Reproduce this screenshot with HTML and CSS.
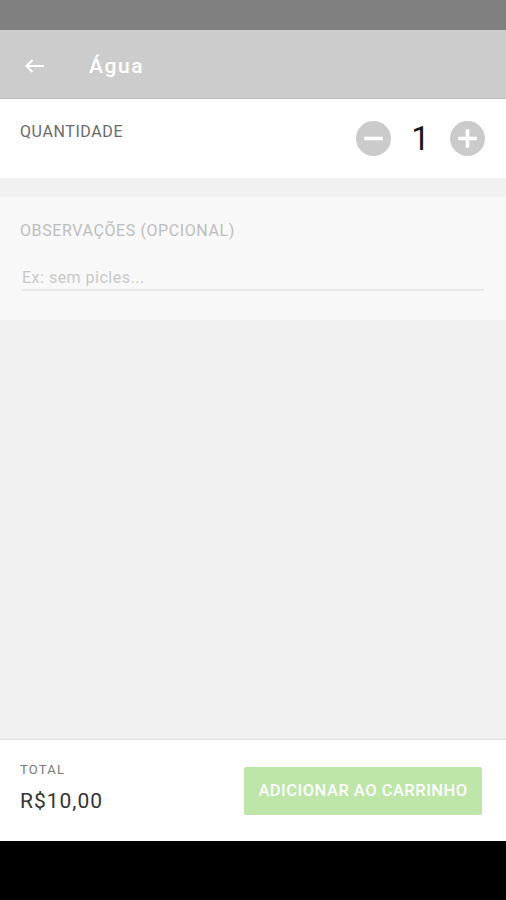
FILE: index.html
```html
<!doctype html>
<html>
<head>
<meta charset="utf-8">
<title>Água</title>
<link rel="stylesheet" href="styles.css">
</head>
<body>
<div class="screen">
	<div class="status"></div>
	<div class="appbar">
		<svg class="back" width="22" height="16" viewBox="0 0 22 16"><path d="M20 8H2.5M8.5 2L2.5 8l6 6" fill="none" stroke="#fff" stroke-width="2"/></svg>
		<h1 class="title">Água</h1>
	</div>
	<div class="qty">
		<span class="label">QUANTIDADE</span>
		<div class="stepper">
			<span class="round"><svg width="35" height="35" viewBox="0 0 36 36"><circle cx="18" cy="18" r="18" fill="#cbcbcb"/><rect x="8.5" y="16.2" width="19" height="3.6" fill="#fff"/></svg></span>
			<span class="num">1</span>
			<span class="round"><svg width="35" height="35" viewBox="0 0 36 36"><circle cx="18" cy="18" r="18" fill="#cbcbcb"/><rect x="8.5" y="16.2" width="19" height="3.6" fill="#fff"/><rect x="16.2" y="8.5" width="3.6" height="19" fill="#fff"/></svg></span>
		</div>
	</div>
	<div class="obs">
		<span class="label light">OBSERVAÇÕES (OPCIONAL)</span>
		<div class="field">Ex: sem picles...</div>
	</div>
	<div class="fill"></div>
	<div class="footer">
		<div class="total">
			<span class="tlabel">TOTAL</span>
			<span class="price">R$10,00</span>
		</div>
		<button class="add">ADICIONAR AO CARRINHO</button>
	</div>
	<div class="nav"></div>
</div>
</body>
</html>
```

FILE: styles.css
```css
*{ margin:0; padding:0; box-sizing:border-box;}
body{ font-family:Roboto, "Liberation Sans", sans-serif; background:#f1f1f1;}
.screen{ width:506px; height:900px; display:flex; flex-direction:column;}
.status{ height:30px; background:#808080;}
.appbar{ height:69px; background:#cccccc; display:flex; align-items:center; padding:3px 0 0 24px; border-bottom:1px solid #bdbdbd;}
.back{ display:block;}
.title{ margin-left:43px; color:#fff; font-size:21px; font-weight:500; letter-spacing:1.6px;}
.qty{ height:79px; background:#fff; display:flex; justify-content:space-between; align-items:flex-start; padding:22px 21px 0 20px;}
.qty .label{ margin-top:1px;}
.label{ font-size:16px; color:#6a6a6a; letter-spacing:0.6px; line-height:20px;}
.label.light{ color:#bdbdbd;}
.stepper{ display:flex; align-items:center;}
.round{ display:block; height:35px;}
.num{ font-size:33px; color:#1a1a1a; width:59px; text-align:center; line-height:35px;}
.obs{ margin-top:19px; height:123px; background:#f8f8f8; padding:24px 22px 0 20px;}
.field{ margin:27px 0 0 2px; font-size:16px; letter-spacing:0.5px; color:#c8c8c8; padding-bottom:2px; border-bottom:2px solid #e8e8e8;}
.fill{ flex:1;}
.footer{ height:102px; background:#fff; border-top:1px solid #dedede; display:flex; align-items:center; justify-content:space-between; padding:0 24px 0 20px;}
.total{ display:flex; flex-direction:column; margin-top:-6px;}
.tlabel{ font-size:13px; letter-spacing:1.2px; color:#777;}
.price{ font-size:21px; letter-spacing:1px; color:#333; margin-top:12px;}
.add{ width:238px; height:48px; border:none; border-radius:2px; background:#bde6a8; color:#fff; font-family:Roboto, "Liberation Sans", sans-serif; font-size:16.5px; letter-spacing:0.5px; font-weight:500;}
.nav{ height:59px; background:#000;}
```
